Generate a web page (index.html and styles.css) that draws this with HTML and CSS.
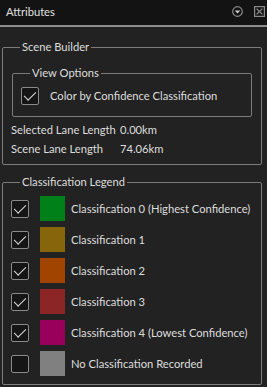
FILE: index.html
```html
<!DOCTYPE html>
<html>
<head>
<meta charset="utf-8">
<link rel="stylesheet" href="styles.css">
</head>
<body>
<div class="panel">
  <div class="titlebar">
    <span class="title">Attributes</span>
    <span class="tb-icons">
      <svg class="ico" width="11" height="11" viewBox="0 0 11 11"><circle cx="5.5" cy="5.5" r="4.8" fill="none" stroke="#8a8a8a" stroke-width="1.2"/><path d="M2.8 4.6 H8.2 L5.5 7.6 Z" fill="#cfcfcf"/></svg>
      <svg class="ico" width="11" height="11" viewBox="0 0 11 11"><rect x="0.6" y="0.6" width="9.8" height="9.8" fill="none" stroke="#8a8a8a" stroke-width="1.2"/><path d="M2.6 2.6 L8.4 8.4 M8.4 2.6 L2.6 8.4" stroke="#8a8a8a" stroke-width="1.3"/></svg>
    </span>
  </div>

  <fieldset class="group scene">
    <legend>Scene Builder</legend>
    <fieldset class="group view">
      <legend>View Options</legend>
      <div class="opt-row">
        <span class="cb checked"></span>
        <span class="lbl">Color by Confidence Classification</span>
      </div>
    </fieldset>
    <div class="stats">
      <span>Selected Lane Length</span><span>0.00km</span>
      <span>Scene Lane Length</span><span>74.06km</span>
    </div>
  </fieldset>

  <fieldset class="group legendbox">
    <legend>Classification Legend</legend>
    <div class="rows">
      <div class="row"><span class="cb checked"></span><span class="sw c0"></span><span class="lbl">Classification 0 (Highest Confidence)</span></div>
      <div class="row"><span class="cb checked"></span><span class="sw c1"></span><span class="lbl">Classification 1</span></div>
      <div class="row"><span class="cb checked"></span><span class="sw c2"></span><span class="lbl">Classification 2</span></div>
      <div class="row"><span class="cb checked"></span><span class="sw c3"></span><span class="lbl">Classification 3</span></div>
      <div class="row"><span class="cb checked"></span><span class="sw c4"></span><span class="lbl">Classification 4 (Lowest Confidence)</span></div>
      <div class="row"><span class="cb"></span><span class="sw c5"></span><span class="lbl">No Classification Recorded</span></div>
    </div>
  </fieldset>
</div>
</body>
</html>
```
FILE: styles.css
```css
* { box-sizing: border-box; }
html, body {
  margin: 0;
  padding: 0;
  background: #222222;
}
body {
  width: 267px;
  height: 387px;
  overflow: hidden;
  font-family: "Lato", "Noto Sans", sans-serif;
  font-size: 11.2px;
  color: #dedede;
}
.panel {
  display: flex;
  flex-direction: column;
}
.titlebar {
  height: 27px;
  background: #131313;
  border-bottom: 2px solid #8c8c8c;
  display: flex;
  align-items: center;
  justify-content: space-between;
  padding: 0 2px 2px 6px;
}
.title {
  font-size: 11.2px;
  line-height: 16px;
  color: #e0e0e0;
}
.tb-icons {
  display: flex;
  gap: 11px;
  align-items: center;
}
.ico { display: block; }

.group {
  border: 1px solid #7c7c7c;
  border-radius: 2px;
  padding: 0;
  margin: 0;
  min-width: 0;
}
.group > legend {
  padding: 0 2px;
  margin-left: 17px;
  line-height: 16px;
  font-size: 11.2px;
  color: #dedede;
}
.scene {
  margin: 12px 5px 0 2px;
  padding-bottom: 7px;
}
.view {
  margin: 10px 9px 0 9px;
  padding: 6px 0 11px 0;
}
.opt-row {
  display: flex;
  align-items: center;
  gap: 11px;
  padding-left: 8px;
}
.cb {
  width: 18px;
  height: 18px;
  flex: none;
  border: 1px solid #8a8a8a;
  border-radius: 2px;
  background: #151515;
  position: relative;
}
.cb.checked::after {
  content: "";
  position: absolute;
  left: 5px;
  top: 1px;
  width: 5px;
  height: 10px;
  border-right: 1.3px solid #d8d8d8;
  border-bottom: 1.3px solid #d8d8d8;
  transform: rotate(45deg) scale(1.05);
  transform-origin: center;
}
.lbl {
  line-height: 16px;
  white-space: nowrap;
}
.stats {
  display: grid;
  grid-template-columns: 109px auto;
  row-gap: 3px;
  margin: 5px 0 0 8px;
  line-height: 16px;
  white-space: nowrap;
}
.legendbox {
  margin: 9px 5px 0 2px;
  padding: 6px 0 8px 0;
}
.rows {
  display: flex;
  flex-direction: column;
  gap: 6px;
  padding-left: 8px;
}
.row {
  display: flex;
  align-items: center;
  height: 25px;
}
.row .cb { margin-right: 11px; }
.sw {
  width: 25px;
  height: 25px;
  flex: none;
  margin-right: 6px;
}
.c0 { background: #008018; }
.c1 { background: #87650a; }
.c2 { background: #a04400; }
.c3 { background: #8c2626; }
.c4 { background: #98005c; }
.c5 { background: #808080; }
```
